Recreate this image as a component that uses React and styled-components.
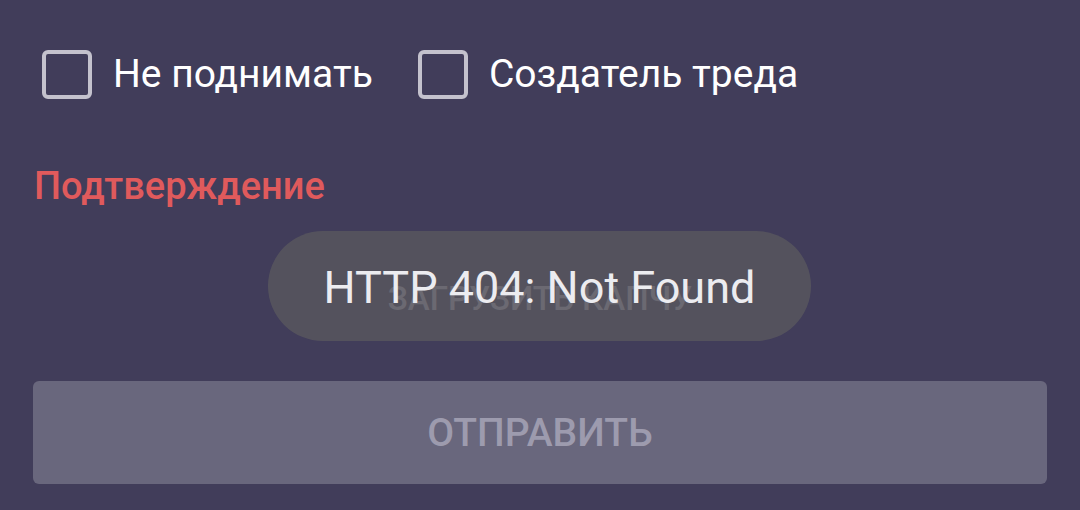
import React from 'react';
import styled, { createGlobalStyle } from 'styled-components';

const GlobalStyle = createGlobalStyle`
  html, body {
    margin: 0;
    padding: 0;
    background: #413d5a;
  }
  body {
    font-family: Roboto, "Noto Sans", sans-serif;
  }
`;

const Screen = styled.div`
  position: relative;
  width: 1080px;
  height: 510px;
  overflow: hidden;
  background: #413d5a;
  box-sizing: border-box;
  padding: 48px 33px 0;
`;

const CheckRow = styled.div`
  display: flex;
  align-items: center;
  gap: 45px;
  padding-left: 9px;
`;

const CheckItem = styled.label`
  display: flex;
  align-items: center;
  gap: 21px;
  color: #ffffff;
  font-size: 39px;
  line-height: 52px;
`;

const Box = styled.span`
  display: block;
  width: 50px;
  height: 49px;
  box-sizing: border-box;
  border: 4px solid #c4c2cd;
  border-radius: 6px;
`;

const Heading = styled.div`
  margin-top: 64px;
  color: #e05a5c;
  font-size: 38px;
  font-weight: 500;
  line-height: 44px;
  padding-left: 1px;
`;

const CaptchaButton = styled.div`
  height: 136px;
  margin-top: 22px;
  display: flex;
  align-items: center;
  justify-content: center;
  color: #9d9bae;
  font-size: 33px;
  font-weight: 500;
  text-transform: uppercase;
`;

const SendButton = styled.div`
  height: 103px;
  width: 1014px;
  margin-top: 15px;
  display: flex;
  align-items: center;
  justify-content: center;
  background: #69677d;
  border-radius: 6px;
  color: #9d9bae;
  font-size: 39px;
  font-weight: 500;
  text-transform: uppercase;
`;

const Toast = styled.div`
  position: absolute;
  left: 268px;
  top: 231px;
  width: 543px;
  height: 110px;
  border-radius: 55px;
  background: rgba(91, 90, 95, 0.76);
  display: flex;
  align-items: center;
  justify-content: center;
  color: #ececf0;
  font-size: 45px;
  line-height: 1;
  padding-top: 2px;
  box-sizing: border-box;
`;

const CheckBox = ({ label }) => (
  <CheckItem>
    <Box />
    <span>{label}</span>
  </CheckItem>
);

const App = () => (
  <>
    <GlobalStyle />
    <Screen>
      <CheckRow>
        <CheckBox label="Не поднимать" />
        <CheckBox label="Создатель треда" />
      </CheckRow>
      <Heading>Подтверждение</Heading>
      <CaptchaButton>Загрузить капчу</CaptchaButton>
      <SendButton>Отправить</SendButton>
      <Toast>HTTP 404: Not Found</Toast>
    </Screen>
  </>
);

export default App;
